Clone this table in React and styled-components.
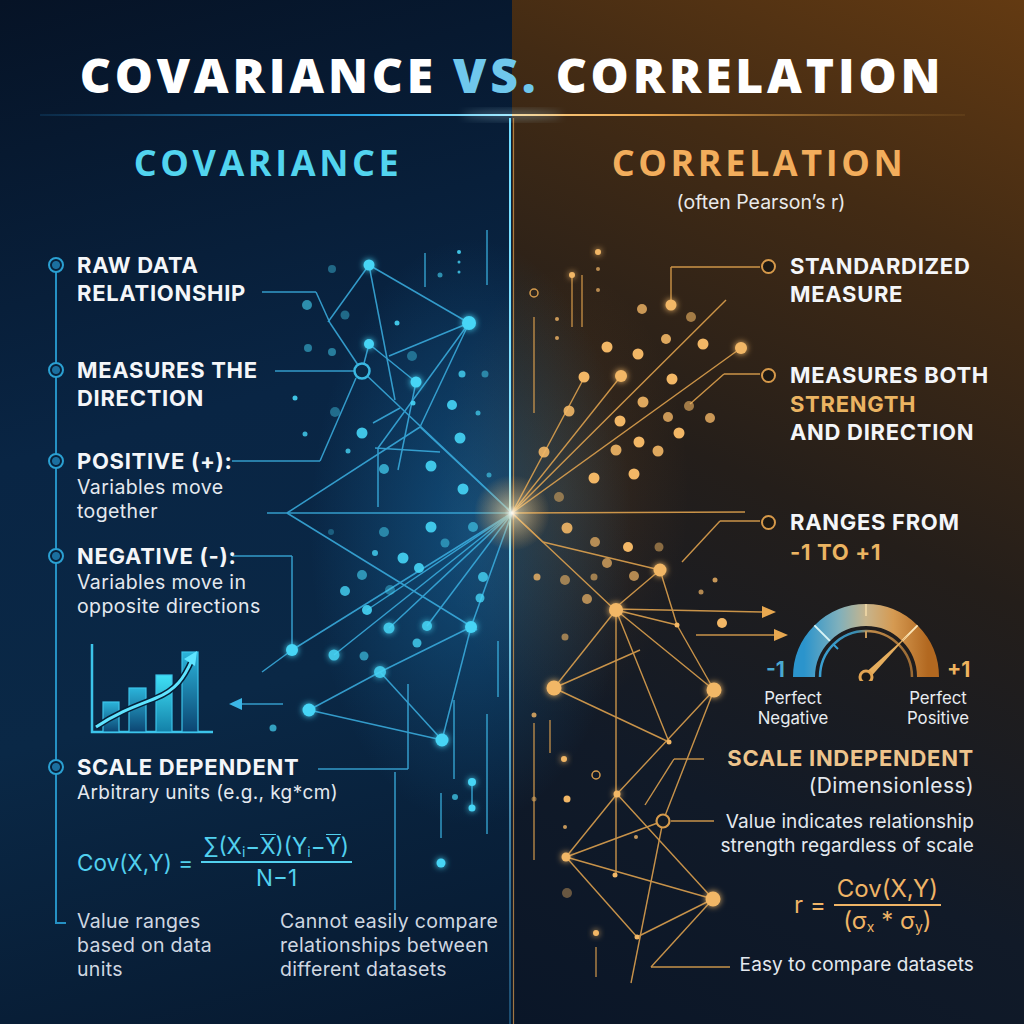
import React from 'react'
import styled, { createGlobalStyle } from 'styled-components'

const GlobalStyle = createGlobalStyle`
  html, body { margin: 0; padding: 0; background: #07172c; }
  body { font-family: Inter, 'Open Sans', 'Noto Sans', sans-serif; }
`

// network drawing data: [x1, y1, x2, y2]
const blueEdges = [
  [369, 265, 469, 323], [369, 265, 328, 322], [369, 265, 395, 400], [469, 323, 389, 356],
  [469, 323, 378, 448], [469, 323, 420, 427], [369, 344, 416, 382], [369, 344, 362, 371],
  [362, 371, 512, 513], [416, 382, 398, 470], [262, 292, 316, 292], [316, 292, 330, 323],
  [330, 323, 362, 371], [275, 371, 354, 371], [232, 461, 320, 461], [320, 461, 356, 378],
  [267, 513, 512, 513], [287, 513, 420, 427], [420, 427, 512, 513], [287, 513, 477, 630],
  [375, 448, 440, 452], [378, 448, 378, 507], [373, 423, 400, 408],
  [512, 513, 292, 650], [512, 513, 334, 655], [512, 513, 389, 628], [512, 513, 427, 626],
  [512, 513, 471, 627], [512, 513, 367, 610], [262, 672, 292, 650], [309, 710, 380, 672],
  [309, 710, 442, 740], [380, 672, 471, 627], [442, 740, 471, 627], [380, 672, 442, 740],
  [232, 556, 292, 556], [292, 556, 292, 648], [318, 769, 408, 769], [408, 769, 408, 684],
  [395, 772, 395, 910], [240, 704, 283, 704],
]
const blueRails = [
  [425, 253, 425, 287], [487, 230, 487, 285], [454, 700, 454, 779], [441, 793, 441, 838],
  [472, 779, 472, 810], [498, 641, 498, 697], [487, 714, 487, 834],
]
// [x, y, r, opacity, glow]
const blueNodes = [
  [369, 265, 5.5, 1, 1], [469, 323, 7, 1, 1], [369, 344, 5, 1, 1], [416, 382, 5.5, 1, 1],
  [307, 305, 5, 0.6], [345, 315, 4.5, 0.4], [397, 323, 2.5, 0.9], [308, 348, 4, 0.5], [332, 352, 4, 0.5],
  [412, 356, 5, 0.4], [462, 374, 3.5, 0.8], [485, 374, 3.5, 0.5], [295, 398, 2.5, 0.9], [413, 403, 2.5, 0.9],
  [452, 405, 5, 0.9], [478, 413, 2.5, 0.7], [335, 412, 5, 0.4], [362, 433, 5.5, 0.9], [460, 438, 5.5, 0.9],
  [305, 434, 2.5, 0.8], [348, 451, 2.5, 0.8], [384, 469, 5, 0.7], [431, 466, 5.5, 0.9], [489, 475, 2.5, 0.6],
  [463, 489, 5.5, 0.9], [431, 527, 5.5, 0.9], [384, 532, 5, 0.5], [473, 527, 5, 0.6], [331, 532, 3, 0.3],
  [375, 553, 3, 0.8], [403, 558, 5.5, 0.9], [445, 543, 4.5, 0.5], [419, 568, 5, 0.9], [362, 575, 5, 0.6],
  [483, 577, 5, 0.8], [345, 591, 5, 0.8], [390, 590, 5, 0.4], [480, 598, 4.5, 0.8], [367, 610, 5, 0.9],
  [332, 269, 4, 0.4], [440, 275, 2.5, 0.6], [459, 252, 2, 0.9], [459, 262, 1.5, 0.8], [459, 272, 1.5, 0.8],
  [292, 650, 6, 1, 1], [334, 655, 5.5, 0.9, 1], [364, 656, 4.5, 0.6], [389, 628, 5.5, 0.9, 1],
  [427, 626, 5, 0.9, 1], [471, 627, 6, 1, 1], [380, 672, 6, 0.9, 1], [309, 710, 6.5, 1, 1],
  [442, 740, 6.5, 1, 1], [273, 728, 3.5, 0.7], [417, 643, 4.5, 0.8], [472, 782, 4, 1, 1],
  [455, 797, 3, 0.7], [472, 808, 3.5, 1, 1], [441, 863, 4.5, 1, 1],
]

const goldEdges = [
  [512, 513, 726, 300], [512, 513, 741, 348], [512, 513, 621, 376], [512, 513, 584, 378],
  [760, 267, 671, 267], [671, 267, 671, 300], [760, 374, 724, 374], [724, 374, 690, 404],
  [512, 513, 745, 512], [760, 521, 720, 521], [720, 521, 682, 562],
  [512, 513, 543, 542], [543, 542, 660, 570], [512, 513, 614, 609], [660, 570, 614, 609],
  [660, 570, 677, 625], [614, 609, 762, 612], [696, 635, 774, 635],
  [616, 610, 554, 688], [616, 610, 714, 690], [616, 610, 616, 875], [616, 610, 669, 742],
  [616, 610, 677, 625], [677, 625, 714, 690], [554, 688, 669, 742], [554, 688, 640, 650],
  [714, 690, 617, 794], [714, 690, 663, 821], [617, 794, 566, 857], [617, 794, 713, 899],
  [566, 857, 713, 899], [566, 857, 663, 821], [663, 821, 631, 983], [713, 899, 637, 937],
  [637, 937, 566, 857], [713, 899, 651, 967], [704, 759, 674, 759], [674, 759, 645, 805],
  [714, 821, 671, 821], [730, 967, 651, 967],
]
const goldRails = [
  [534, 317, 534, 413], [582, 275, 582, 327], [572, 275, 572, 327], [534, 723, 534, 860],
  [550, 720, 550, 753], [596, 947, 596, 977],
]
const goldNodes = [
  [671, 305, 5.5, 1, 1], [741, 348, 6, 1, 1], [621, 376, 6, 1, 1], [689, 406, 5, 0.6],
  [642, 309, 5, 0.8], [691, 317, 5, 0.6], [666, 339, 5, 0.9], [703, 344, 5.5, 1], [607, 347, 5.5, 1],
  [638, 354, 5.5, 1], [584, 377, 5.5, 1], [672, 379, 5.5, 1], [569, 411, 5.5, 0.9], [643, 402, 5.5, 0.9],
  [668, 417, 5, 0.8], [620, 421, 5.5, 1], [710, 418, 5, 0.8], [679, 433, 5.5, 1], [639, 442, 5.5, 1],
  [616, 450, 5.5, 0.9], [658, 451, 5.5, 0.9], [544, 452, 5.5, 0.9], [594, 478, 5.5, 1], [634, 474, 5.5, 1],
  [559, 497, 5, 0.5], [598, 252, 3, 1, 1], [572, 275, 3, 1, 1], [557, 319, 2, 0.8], [557, 338, 2, 0.8],
  [598, 269, 2, 0.7], [598, 290, 2, 0.7],
  [567, 528, 5.5, 0.9], [595, 542, 5, 0.7], [628, 547, 5, 1], [659, 547, 4.5, 0.5], [607, 563, 5, 0.7],
  [634, 576, 5, 0.7], [537, 577, 3.5, 0.8], [565, 580, 5, 0.6], [594, 577, 3.5, 0.6], [587, 599, 5, 0.7],
  [715, 580, 2.5, 0.8], [701, 592, 2.5, 0.7], [722, 623, 5, 1], [565, 637, 3.5, 0.6],
  [660, 570, 6.5, 1, 1], [616, 610, 7, 1, 1], [554, 688, 7.5, 1, 1], [714, 690, 7.5, 1, 1],
  [713, 899, 7.5, 1, 1], [566, 857, 4.5, 1, 1], [669, 742, 2.5, 1], [617, 794, 3.5, 1, 1],
  [615, 875, 2.5, 1], [637, 937, 2.5, 1], [677, 625, 2.5, 1],
  [534, 715, 2.5, 0.8], [564, 759, 3, 1, 1], [567, 799, 3.5, 1], [534, 799, 2.5, 0.5],
  [565, 827, 2, 0.8], [636, 837, 2, 0.8], [567, 893, 5, 0.4], [596, 933, 3, 1, 1],
]

const Backdrop = () => (
  <Canvas viewBox="0 0 1024 1024">
    <defs>
      <filter id="glow" x="-100%" y="-100%" width="300%" height="300%">
        <feGaussianBlur stdDeviation="3" result="b" />
        <feMerge><feMergeNode in="b" /><feMergeNode in="SourceGraphic" /></feMerge>
      </filter>
      <filter id="soft" x="-50%" y="-50%" width="200%" height="200%">
        <feGaussianBlur stdDeviation="4" />
      </filter>
      <linearGradient id="ruleL" x1="40" y1="0" x2="512" y2="0" gradientUnits="userSpaceOnUse">
        <stop offset="0" stopColor="#1c6fa8" stopOpacity="0.2" />
        <stop offset="0.7" stopColor="#2aa6e4" />
        <stop offset="1" stopColor="#9eeaff" />
      </linearGradient>
      <linearGradient id="ruleR" x1="512" y1="0" x2="965" y2="0" gradientUnits="userSpaceOnUse">
        <stop offset="0" stopColor="#ffd38a" />
        <stop offset="0.3" stopColor="#e8a44c" />
        <stop offset="1" stopColor="#7a5424" stopOpacity="0.3" />
      </linearGradient>
      <linearGradient id="spine" x1="0" y1="118" x2="0" y2="1024" gradientUnits="userSpaceOnUse">
        <stop offset="0" stopColor="#6fdcff" />
        <stop offset="0.45" stopColor="#8fe8ff" />
        <stop offset="1" stopColor="#2f7fb0" stopOpacity="0.5" />
      </linearGradient>
      <radialGradient id="core" cx="512" cy="513" r="38" gradientUnits="userSpaceOnUse">
        <stop offset="0" stopColor="#ffffff" stopOpacity="0.95" />
        <stop offset="0.2" stopColor="#ffe2a8" stopOpacity="0.55" />
        <stop offset="1" stopColor="#ffb050" stopOpacity="0" />
      </radialGradient>
    </defs>

    <line x1="40" y1="115" x2="512" y2="115" stroke="url(#ruleL)" strokeWidth="2" />
    <line x1="512" y1="115" x2="965" y2="115" stroke="url(#ruleR)" strokeWidth="2" />
    <ellipse cx="512" cy="115" rx="50" ry="4" fill="#bff0ff" opacity="0.3" filter="url(#soft)" />

    <line x1="509" y1="118" x2="509" y2="1024" stroke="#38b4ec" strokeWidth="6" opacity="0.35" filter="url(#soft)" />
    <line x1="510" y1="118" x2="510" y2="1024" stroke="url(#spine)" strokeWidth="2" />
    <line x1="513.5" y1="118" x2="513.5" y2="1024" stroke="#e0a050" strokeWidth="1.2" opacity="0.7" />

    <g stroke="#3bb0e2" strokeWidth="1.5" opacity="0.85">
      {blueEdges.map(([a, b, c, d], i) => <line key={i} x1={a} y1={b} x2={c} y2={d} />)}
    </g>
    <g stroke="#3bb6e6" strokeWidth="2" opacity="0.6">
      {blueRails.map(([a, b, c, d], i) => <line key={i} x1={a} y1={b} x2={c} y2={d} />)}
    </g>
    <polygon points="229,704 242,698 242,710" fill="#3bb6e6" />
    {blueNodes.map(([x, y, r, o, g], i) => (
      <circle key={i} cx={x} cy={y} r={r} fill="#46d5f6" opacity={o} filter={g ? 'url(#glow)' : undefined} />
    ))}
    <circle cx="362" cy="371" r="7.5" fill="#0a2a48" stroke="#3ab8e2" strokeWidth="2.5" />

    <g stroke="#e8a850" strokeWidth="1.4" opacity="0.85">
      {goldEdges.map(([a, b, c, d], i) => <line key={i} x1={a} y1={b} x2={c} y2={d} />)}
    </g>
    <g stroke="#e8a850" strokeWidth="1.8" opacity="0.6">
      {goldRails.map(([a, b, c, d], i) => <line key={i} x1={a} y1={b} x2={c} y2={d} />)}
    </g>
    <polygon points="776,612 762,606 762,618" fill="#e8a850" />
    <polygon points="788,635 774,629 774,641" fill="#e8a850" />
    {goldNodes.map(([x, y, r, o, g], i) => (
      <circle key={i} cx={x} cy={y} r={r} fill="#f2b766" opacity={o} filter={g ? 'url(#glow)' : undefined} />
    ))}
    <circle cx="663" cy="821" r="6.5" fill="#111a26" stroke="#d49a4c" strokeWidth="2.2" />
    <circle cx="534" cy="293" r="4" fill="none" stroke="#d49a4c" strokeWidth="1.5" />
    <circle cx="596" cy="775" r="4" fill="none" stroke="#d49a4c" strokeWidth="1.5" />

    <circle cx="512" cy="513" r="38" fill="url(#core)" />
  </Canvas>
)

const BarChart = () => (
  <Chart viewBox="0 0 130 92" width="130" height="92">
    <defs>
      <linearGradient id="bar" x1="0" y1="0" x2="0" y2="1">
        <stop offset="0" stopColor="#2bb4da" />
        <stop offset="1" stopColor="#0c4572" />
      </linearGradient>
      <linearGradient id="barHi" x1="0" y1="0" x2="0" y2="1">
        <stop offset="0" stopColor="#3fe0f6" />
        <stop offset="1" stopColor="#1380a8" />
      </linearGradient>
    </defs>
    <path d="M4 0 V88 H125" fill="none" stroke="#3cc4ea" strokeWidth="2.5" />
    <rect x="15" y="58" width="16" height="30" fill="url(#bar)" stroke="#3cc4ea" strokeWidth="1.2" />
    <rect x="41" y="44" width="17" height="44" fill="url(#bar)" stroke="#3cc4ea" strokeWidth="1.2" />
    <rect x="68" y="31" width="16" height="57" fill="url(#barHi)" stroke="#3cc4ea" strokeWidth="1.2" />
    <rect x="94" y="8" width="16" height="80" fill="url(#bar)" stroke="#3cc4ea" strokeWidth="1.2" />
    <path d="M8 83 C30 68 48 62 68 54 S96 34 104 16" fill="none" stroke="#062038" strokeWidth="6" />
    <path d="M8 83 C30 68 48 62 68 54 S96 34 104 16" fill="none" stroke="#5fe4ff" strokeWidth="3" />
    <polygon points="109,7 96,15 107,22" fill="#5fe4ff" />
  </Chart>
)

const GaugeDial = () => (
  <Dial viewBox="0 0 150 78" width="150" height="78">
    <defs>
      <linearGradient id="band" x1="0" y1="0" x2="1" y2="0">
        <stop offset="0" stopColor="#2b94cc" />
        <stop offset="0.28" stopColor="#7fb0bc" />
        <stop offset="0.5" stopColor="#c7b48c" />
        <stop offset="0.72" stopColor="#d59a52" />
        <stop offset="1" stopColor="#b26820" />
      </linearGradient>
      <linearGradient id="inner" x1="0" y1="0" x2="1" y2="0">
        <stop offset="0" stopColor="#3aa0d2" />
        <stop offset="0.4" stopColor="#3a8cb0" />
        <stop offset="0.55" stopColor="#c08a48" />
        <stop offset="1" stopColor="#9a6a34" />
      </linearGradient>
    </defs>
    <path d="M13 74 A62 62 0 0 1 137 74" fill="none" stroke="url(#band)" strokeWidth="22" />
    <line x1="38.9" y1="37.9" x2="23.4" y2="22.4" stroke="#d8f4f6" strokeWidth="2" />
    <line x1="111.1" y1="37.9" x2="126.6" y2="22.4" stroke="#fbe6b8" strokeWidth="2" />
    <line x1="75" y1="13" x2="75" y2="1" stroke="#f4dcaa" strokeWidth="1.5" />
    <path d="M29 74 A46 46 0 0 1 121 74" fill="none" stroke="url(#inner)" strokeWidth="2.5" />
    <path d="M29 74 H35 M115 74 H121" stroke="url(#inner)" strokeWidth="2.5" />
    <line x1="42.5" y1="41.5" x2="47" y2="46" stroke="#3aa0d2" strokeWidth="2" />
    <line x1="75" y1="28" x2="75" y2="35" stroke="#c89a5a" strokeWidth="2" />
    <polygon points="77.4,76.4 72.6,71.6 118,31" fill="#e6ae5e" />
    <circle cx="75" cy="74" r="6" fill="#1a1816" stroke="#e2a452" strokeWidth="3" />
  </Dial>
)

export default function App() {
  return (
    <Page>
      <GlobalStyle />
      <Backdrop />
      <Title>COVARIANCE <Vs>VS.</Vs> CORRELATION</Title>
      <Columns>
        <LeftCol>
          <Heading $inset="0 0 0 24px">COVARIANCE</Heading>
          <Timeline>
            <Point>
              <Dot />
              <Label>RAW DATA<br />RELATIONSHIP</Label>
            </Point>
            <Point $mt={49}>
              <Dot />
              <Label>MEASURES THE<br />DIRECTION</Label>
            </Point>
            <Point $mt={35}>
              <Dot />
              <Label>POSITIVE (+):</Label>
              <Body>Variables move<br />together</Body>
            </Point>
            <Point $mt={19}>
              <Dot />
              <Label>NEGATIVE (-):</Label>
              <Body>Variables move in<br />opposite directions</Body>
            </Point>
            <BarChart />
            <Point $mt={17}>
              <Dot />
              <Label>SCALE DEPENDENT</Label>
              <Body $size={19}>Arbitrary units (e.g., kg*cm)</Body>
            </Point>
            <Formula $color="#52d0ee" $mt={26} $size={22.5}>
              <span>Cov(X,Y) =</span>
              <Fraction>
                <Numer>∑(X<Sub>i</Sub>−<Over>X</Over>)(Y<Sub>i</Sub>−<Over>Y</Over>)</Numer>
                <Denom>N−1</Denom>
              </Fraction>
            </Formula>
            <Notes>
              <span>Value ranges<br />based on data<br />units</span>
              <span>Cannot easily compare<br />relationships between<br />different datasets</span>
            </Notes>
          </Timeline>
        </LeftCol>

        <RightCol>
          <Heading $gold $inset="0 18px 0 0">CORRELATION</Heading>
          <Caption>(often Pearson’s r)</Caption>
          <KeyList>
            <Point>
              <Ring />
              <Label>STANDARDIZED<br />MEASURE</Label>
            </Point>
            <Point $mt={53}>
              <Ring />
              <Label $lh={28.5}>MEASURES BOTH<br /><Gold>STRENGTH</Gold><br />AND DIRECTION</Label>
            </Point>
            <Point $mt={60}>
              <Ring $top={8} />
              <Label $lh={30}>RANGES FROM<br /><Gold>-1 TO +1</Gold></Label>
            </Point>
          </KeyList>
          <GaugeRow>
            <EndLabel $color="#4aa9cf">-1</EndLabel>
            <GaugeDial />
            <EndLabel $color="#efb45e">+1</EndLabel>
          </GaugeRow>
          <GaugeCaptions>
            <span>Perfect<br />Negative</span>
            <span>Perfect<br />Positive</span>
          </GaugeCaptions>
          <Lower>
            <Label $color="#eec48c">SCALE INDEPENDENT</Label>
            <Body $size={21} $lh={28}>(Dimensionless)</Body>
            <Body $mt={10} $size={19} $ls={0.1} $right>Value indicates relationship<br />strength regardless of scale</Body>
            <Formula $color="#efb466" $mt={16} $mr={33}>
              <span>r =</span>
              <Fraction>
                <Numer>Cov(X,Y)</Numer>
                <Denom>(σ<Sub>x</Sub> * σ<Sub>y</Sub>)</Denom>
              </Fraction>
            </Formula>
            <Body $mt={17} $size={19} $ls={0.1}>Easy to compare datasets</Body>
          </Lower>
        </RightCol>
      </Columns>
    </Page>
  )
}

const Page = styled.main`
  position: relative;
  width: 1024px;
  height: 1024px;
  overflow: hidden;
  box-sizing: border-box;
  padding-top: 51px;
  display: flex;
  flex-direction: column;
  background:
    radial-gradient(ellipse 230px 420px at 46% 52%, rgba(30, 130, 195, 0.4), transparent 70%),
    radial-gradient(ellipse 180px 320px at 55% 48%, rgba(190, 115, 40, 0.16), transparent 70%),
    linear-gradient(165deg, #061326 0%, #092544 40%, #0a2846 65%, #07192f 100%) left top / 50% 100% no-repeat,
    linear-gradient(205deg, #633a12 0%, #432b14 22%, #241e1a 48%, #111a28 75%, #0a1628 100%) right top / 50% 100% no-repeat;
`

const Canvas = styled.svg`
  position: absolute;
  inset: 0;
  width: 1024px;
  height: 1024px;
  pointer-events: none;
`

const Title = styled.h1`
  position: relative;
  margin: 0;
  text-align: center;
  font-family: 'Open Sans', sans-serif;
  font-size: 48px;
  line-height: 48px;
  font-weight: 800;
  letter-spacing: 3.8px;
  color: #ffffff;
`

const Vs = styled.span`
  color: #6fc7ec;
`

const Columns = styled.div`
  position: relative;
  display: grid;
  grid-template-columns: 512px 512px;
  margin-top: 44px;
`

const LeftCol = styled.section`
  display: flex;
  flex-direction: column;
`

const RightCol = styled.section`
  display: flex;
  flex-direction: column;
`

const Heading = styled.h2`
  margin: 0;
  padding: ${p => p.$inset};
  text-align: center;
  font-family: 'Open Sans', sans-serif;
  font-size: 36px;
  line-height: 40px;
  font-weight: 700;
  letter-spacing: 3.6px;
  color: ${p => (p.$gold ? '#f2ad5c' : '#52d4ef')};
`

const Caption = styled.div`
  margin-top: 6px;
  padding-right: 14px;
  text-align: center;
  font-size: 19.5px;
  line-height: 26px;
  color: #e9e9ea;
`

const Timeline = styled.div`
  position: relative;
  display: flex;
  flex-direction: column;
  margin: 68px 0 0 55px;
  padding-left: 22px;

  &::before {
    content: '';
    position: absolute;
    left: 0;
    top: 14px;
    bottom: 58px;
    width: 2px;
    background: #2591c4;
  }
  &::after {
    content: '';
    position: absolute;
    left: 0;
    bottom: 57px;
    width: 11px;
    height: 2px;
    background: #2591c4;
  }
`

const KeyList = styled.div`
  display: flex;
  flex-direction: column;
  margin-top: 37px;
  padding-left: 278px;
`

const Point = styled.div`
  position: relative;
  margin-top: ${p => p.$mt || 0}px;
`

const Dot = styled.span`
  position: absolute;
  left: -29px;
  top: 6px;
  width: 16px;
  height: 16px;
  box-sizing: border-box;
  border-radius: 50%;
  border: 2px solid #2ba0d2;
  background: radial-gradient(circle, #1b6f9f 0 3.5px, #07203a 4.5px);
`

const Ring = styled.span`
  position: absolute;
  left: -29px;
  top: ${p => p.$top || 7}px;
  width: 15px;
  height: 15px;
  box-sizing: border-box;
  border-radius: 50%;
  border: 2px solid #d6994a;
  background: #1d1812;
`

const Label = styled.div`
  font-size: 22px;
  line-height: ${p => p.$lh || 28}px;
  font-weight: 700;
  letter-spacing: 0.7px;
  color: ${p => p.$color || '#f4f6f9'};
`

const Gold = styled.span`
  color: #ebb462;
`

const Body = styled.div`
  margin-top: ${p => p.$mt || 0}px;
  font-size: ${p => p.$size || 19.5}px;
  line-height: ${p => p.$lh || 24}px;
  letter-spacing: ${p => p.$ls ?? 0.4}px;
  text-align: ${p => (p.$right ? 'right' : 'left')};
  color: #e4e9ef;
`

const Chart = styled.svg`
  display: block;
  margin: 26px 0 0 11px;
`

const Formula = styled.div`
  display: flex;
  align-items: center;
  gap: 8px;
  margin-top: ${p => p.$mt}px;
  margin-right: ${p => p.$mr || 0}px;
  font-size: ${p => p.$size || 24}px;
  color: ${p => p.$color};
`

const Fraction = styled.span`
  display: inline-flex;
  flex-direction: column;
  align-items: center;
`

const Numer = styled.span`
  padding: 0 3px;
  line-height: 30px;
  border-bottom: 2px solid currentColor;
`

const Denom = styled.span`
  line-height: 30px;
`

const Sub = styled.sub`
  font-size: 14px;
  line-height: 0;
  vertical-align: -3px;
`

const Over = styled.span`
  display: inline-block;
  line-height: 1;
  border-top: 1.5px solid currentColor;
`

const Notes = styled.div`
  display: grid;
  grid-template-columns: 203px auto;
  margin-top: 16px;
  font-size: 19.5px;
  line-height: 24px;
  letter-spacing: 0.3px;
  color: #cfd7e1;
`

const GaugeRow = styled.div`
  display: flex;
  align-items: flex-end;
  margin: 36px 0 0 254px;
`

const Dial = styled.svg`
  display: block;
  margin: 0 6px;
`

const EndLabel = styled.span`
  font-size: 21px;
  line-height: 22px;
  font-weight: 700;
  color: ${p => p.$color};
`

const GaugeCaptions = styled.div`
  display: grid;
  grid-template-columns: 100px 100px;
  column-gap: 45px;
  margin: 7px 0 0 231px;
  text-align: center;
  font-size: 16.8px;
  line-height: 20.5px;
  color: #e8ecf0;
`

const Lower = styled.div`
  display: flex;
  flex-direction: column;
  align-items: flex-end;
  margin-top: 15px;
  padding-right: 50px;
`
